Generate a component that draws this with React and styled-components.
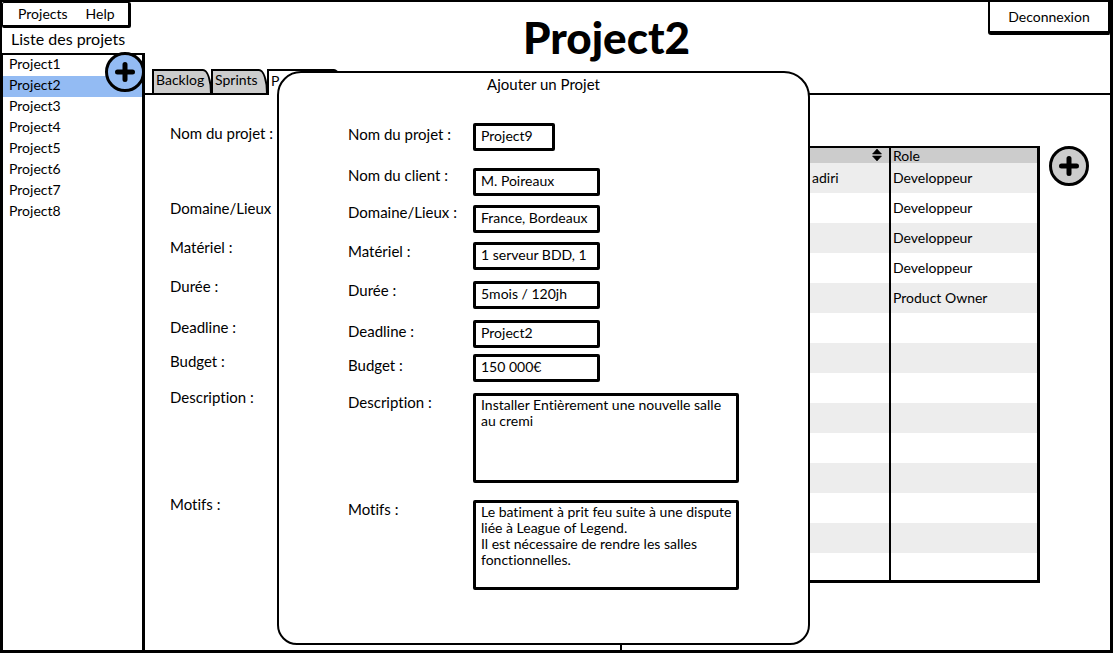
import React from "react";
import styled, { createGlobalStyle } from "styled-components";

const ink = "#000";
const blue = "#93bbf3";
const grey = "#cccccc";

const GlobalStyle = createGlobalStyle`
  * { box-sizing: border-box; }
  body {
    margin: 0;
    background: #fff;
    color: ${ink};
    font-family: Lato, "Liberation Sans", sans-serif;
    font-size: 14px;
    font-variant-ligatures: none;
  }
  button, input, textarea { font: inherit; color: inherit; margin: 0; font-variant-ligatures: none; }
`;

const Screen = styled.div`
  position: relative;
  display: flex;
  min-height: 100vh;
  border: solid ${ink};
  border-width: 2px 3px 3px 2px;
`;

const Sidebar = styled.aside`
  position: relative;
  display: flex;
  flex-direction: column;
  width: 143px;
  flex: none;
`;

const MenuBar = styled.nav`
  display: flex;
  align-items: center;
  align-self: flex-start;
  gap: 18px;
  width: 129px;
  height: 26px;
  padding: 0 15px 1px;
  border: solid ${ink};
  border-width: 1px 3px 3px 1px;
  border-radius: 2px;
`;

const MenuButton = styled.button`
  padding: 0;
  border: 0;
  background: none;
  line-height: 20px;
`;

const ListTitle = styled.h2`
  margin: 0;
  padding: 0 9px 3px;
  font-size: 16px;
  font-weight: 400;
  line-height: 22px;
`;

const ProjectList = styled.ul`
  flex: 1;
  margin: 0;
  padding: 0;
  list-style: none;
  border: solid ${ink};
  border-width: 2px 3px 0 1px;
`;

const ProjectItem = styled.li`
  background: ${(p) => (p.$selected ? blue : "transparent")};
`;

const ProjectLink = styled.a`
  display: block;
  padding: 0 6px 4px;
  color: inherit;
  line-height: 17px;
  text-decoration: none;
`;

const RoundButton = styled.button`
  display: grid;
  place-items: center;
  flex: none;
  width: 40px;
  height: 40px;
  padding: 0;
  border: 3px solid ${ink};
  border-radius: 50%;
  background: ${(p) => p.$fill};
`;

const ListAction = styled.div`
  position: absolute;
  top: 50px;
  right: 0;
`;

const Main = styled.main`
  display: flex;
  flex: 1;
  flex-direction: column;
  min-width: 0;
`;

const Header = styled.header`
  display: grid;
  grid-template-columns: 1fr auto 1fr;
  height: 67px;
`;

const Title = styled.h1`
  grid-column: 2;
  margin: 0;
  padding: 11px 42px 0 0;
  font-size: 44px;
  font-weight: 900;
  line-height: 48px;
`;

const Logout = styled.button`
  justify-self: end;
  width: 122px;
  height: 33px;
  padding: 0;
  border: solid ${ink};
  border-width: 0 2px 4px 2px;
  border-radius: 0 0 2px 3px;
  background: #fff;
`;

const Tabs = styled.div`
  display: flex;
  height: 26px;
  padding-left: 7px;
  margin-bottom: -2px;
  z-index: 1;
`;

const Tab = styled.button`
  width: ${(p) => p.$width}px;
  padding: 0 2px 4px;
  border: solid ${ink};
  border-width: 2px 2px ${(p) => (p.$active ? 0 : 2)}px 2px;
  border-radius: 0 9px 0 0 / 0 24px 0 0;
  margin-right: -1px;
  background: ${(p) => (p.$active ? "#fff" : grey)};
  line-height: 18px;
  text-align: left;
`;

const Panel = styled.section`
  display: flex;
  flex: 1;
  align-items: flex-start;
  justify-content: space-between;
  padding: 28px 21px 0 25px;
  border-top: 2px solid ${ink};
`;

const Labels = styled.div`
  display: flex;
  flex-direction: column;
  align-items: flex-start;
`;

const labelText = `
  font-size: 15px;
  line-height: 20px;
  white-space: nowrap;
`;

const Term = styled.span`
  ${labelText}
  margin-bottom: ${(p) => p.$after}px;
`;

const FieldLabel = styled.label`
  ${labelText}
  margin-bottom: ${(p) => p.$after}px;
`;

const Members = styled.div`
  display: flex;
  align-items: flex-start;
  gap: 9px;
  padding-top: 23px;
`;

const MemberTable = styled.table`
  width: 232px;
  border: solid ${ink};
  border-width: 2px 3px 3px 2px;
  border-spacing: 0;
  table-layout: fixed;
`;

const HeadCell = styled.th`
  height: 15px;
  padding: 0 7px 0 2px;
  background: ${grey};
  font-weight: 400;
  line-height: 15px;
  text-align: left;
  & + & { border-left: 2px solid ${ink}; }
`;

const SortButton = styled.button`
  display: block;
  margin-left: auto;
  padding: 0 0 2px;
  border: 0;
  background: none;
  line-height: 0;
`;

const Row = styled.tr`
  &:nth-child(odd) { background: #ededed; }
`;

const Cell = styled.td`
  height: 30px;
  padding: 0 2px 2px;
  & + & { border-left: 2px solid ${ink}; }
  tr:last-child > & { height: 27px; }
`;

const Dialog = styled.div`
  position: absolute;
  top: 69px;
  right: 300px;
  left: 275px;
  z-index: 2;
  min-height: 574px;
  border: 2px solid ${ink};
  border-radius: 24px 26px 20px 20px;
  background: #fff;

  &::after {
    position: absolute;
    top: 100%;
    left: 341px;
    width: 2px;
    height: 7px;
    background: ${ink};
    content: "";
  }
`;

const DialogTitle = styled.h2`
  margin: 0;
  font-size: 15px;
  font-weight: 400;
  line-height: 22px;
  text-align: center;
`;

const Form = styled.form`
  display: flex;
  padding: 28px 69px 0;
`;

const FormLabels = styled(Labels)`
  width: 125px;
  padding-top: 1px;
`;

const Fields = styled.div`
  display: flex;
  flex: 1;
  flex-direction: column;
  align-items: flex-start;
`;

const TextInput = styled.input`
  width: ${(p) => (p.$short ? 82 : 127)}px;
  height: 28px;
  margin-bottom: ${(p) => p.$after}px;
  padding: 0 5px 3px;
  border: 3px solid ${ink};
  border-radius: 2px;
  background: #fff;
`;

const TextArea = styled.textarea`
  display: block;
  width: 100%;
  height: 90px;
  margin-bottom: ${(p) => p.$after}px;
  padding: 1px 0 1px 5px;
  border: 3px solid ${ink};
  border-radius: 2px;
  background: #fff;
  line-height: 16px;
  resize: none;
  overflow: hidden;
`;

const Plus = () => (
  <svg width="20" height="20" viewBox="0 0 20 20" aria-hidden="true">
    <path d="M10 2.5V17.5M2.5 10H17.5" stroke={ink} strokeWidth="5" strokeLinecap="round" />
  </svg>
);

const SortIcon = () => (
  <svg width="10" height="12" viewBox="0 0 10 12" aria-hidden="true">
    <path d="M5 0L9.5 5H.5ZM5 12L.5 7H9.5Z" fill={ink} stroke={ink} strokeWidth=".6" />
  </svg>
);

const projects = [1, 2, 3, 4, 5, 6, 7, 8].map((n) => `Project${n}`);

const terms = [
  ["Nom du projet :", 55],
  ["Domaine/Lieux", 19],
  ["Matériel :", 19],
  ["Durée :", 21],
  ["Deadline :", 14],
  ["Budget :", 16],
  ["Description :", 87],
  ["Motifs :", 0],
];

const fields = [
  { id: "name", label: "Nom du projet :", after: 21, value: "Project9", gap: 17, short: true },
  { id: "client", label: "Nom du client :", after: 17, value: "M. Poireaux", gap: 9 },
  { id: "place", label: "Domaine/Lieux :", after: 19, value: "France, Bordeaux", gap: 9 },
  { id: "gear", label: "Matériel :", after: 19, value: "1 serveur BDD, 1", gap: 11 },
  { id: "time", label: "Durée :", after: 21, value: "5mois / 120jh", gap: 11 },
  { id: "deadline", label: "Deadline :", after: 14, value: "Project2", gap: 6 },
  { id: "budget", label: "Budget :", after: 17, value: "150 000€", gap: 11 },
  {
    id: "description", label: "Description :", after: 87, gap: 17, area: true,
    value: "Installer Entièrement une nouvelle salle\nau cremi",
  },
  {
    id: "reasons", label: "Motifs :", after: 0, gap: 0, area: true,
    value: "Le batiment à prit feu suite à une dispute\nliée à League of Legend.\nIl est nécessaire de rendre les salles\nfonctionnelles.",
  },
];

const members = [
  ["adiri", "Developpeur"],
  ["", "Developpeur"],
  ["", "Developpeur"],
  ["", "Developpeur"],
  ["", "Product Owner"],
  ...Array.from({ length: 9 }, () => ["", ""]),
];

export default function App() {
  return (
    <>
      <GlobalStyle />
      <Screen>
        <Sidebar>
          <MenuBar>
            <MenuButton>Projects</MenuButton>
            <MenuButton>Help</MenuButton>
          </MenuBar>
          <ListTitle>Liste des projets</ListTitle>
          <ProjectList>
            {projects.map((name) => (
              <ProjectItem key={name} $selected={name === "Project2"}>
                <ProjectLink href="#">{name}</ProjectLink>
              </ProjectItem>
            ))}
          </ProjectList>
          <ListAction>
            <RoundButton $fill={blue} aria-label="Ajouter un projet"><Plus /></RoundButton>
          </ListAction>
        </Sidebar>

        <Main>
          <Header>
            <Title>Project2</Title>
            <Logout>Deconnexion</Logout>
          </Header>
          <Tabs>
            <Tab $width={60}>Backlog</Tab>
            <Tab $width={57}>Sprints</Tab>
            <Tab $width={76} $active>P</Tab>
          </Tabs>
          <Panel>
            <Labels>
              {terms.map(([text, after]) => (
                <Term key={text} $after={after}>{text}</Term>
              ))}
            </Labels>
            <Members>
              <MemberTable>
                <colgroup>
                  <col />
                  <col style={{ width: "148px" }} />
                </colgroup>
                <thead>
                  <tr>
                    <HeadCell>
                      <SortButton aria-label="Trier"><SortIcon /></SortButton>
                    </HeadCell>
                    <HeadCell>Role</HeadCell>
                  </tr>
                </thead>
                <tbody>
                  {members.map(([name, role], i) => (
                    <Row key={i}>
                      <Cell>{name}</Cell>
                      <Cell>{role}</Cell>
                    </Row>
                  ))}
                </tbody>
              </MemberTable>
              <RoundButton $fill={grey} aria-label="Ajouter un membre"><Plus /></RoundButton>
            </Members>
          </Panel>
        </Main>

        <Dialog role="dialog" aria-labelledby="dialog-title">
          <DialogTitle id="dialog-title">Ajouter un Projet</DialogTitle>
          <Form>
            <FormLabels>
              {fields.map((f) => (
                <FieldLabel key={f.id} htmlFor={f.id} $after={f.after}>{f.label}</FieldLabel>
              ))}
            </FormLabels>
            <Fields>
              {fields.map((f) =>
                f.area ? (
                  <TextArea key={f.id} id={f.id} defaultValue={f.value} $after={f.gap} />
                ) : (
                  <TextInput key={f.id} id={f.id} defaultValue={f.value} $after={f.gap} $short={f.short} />
                )
              )}
            </Fields>
          </Form>
        </Dialog>
      </Screen>
    </>
  );
}
